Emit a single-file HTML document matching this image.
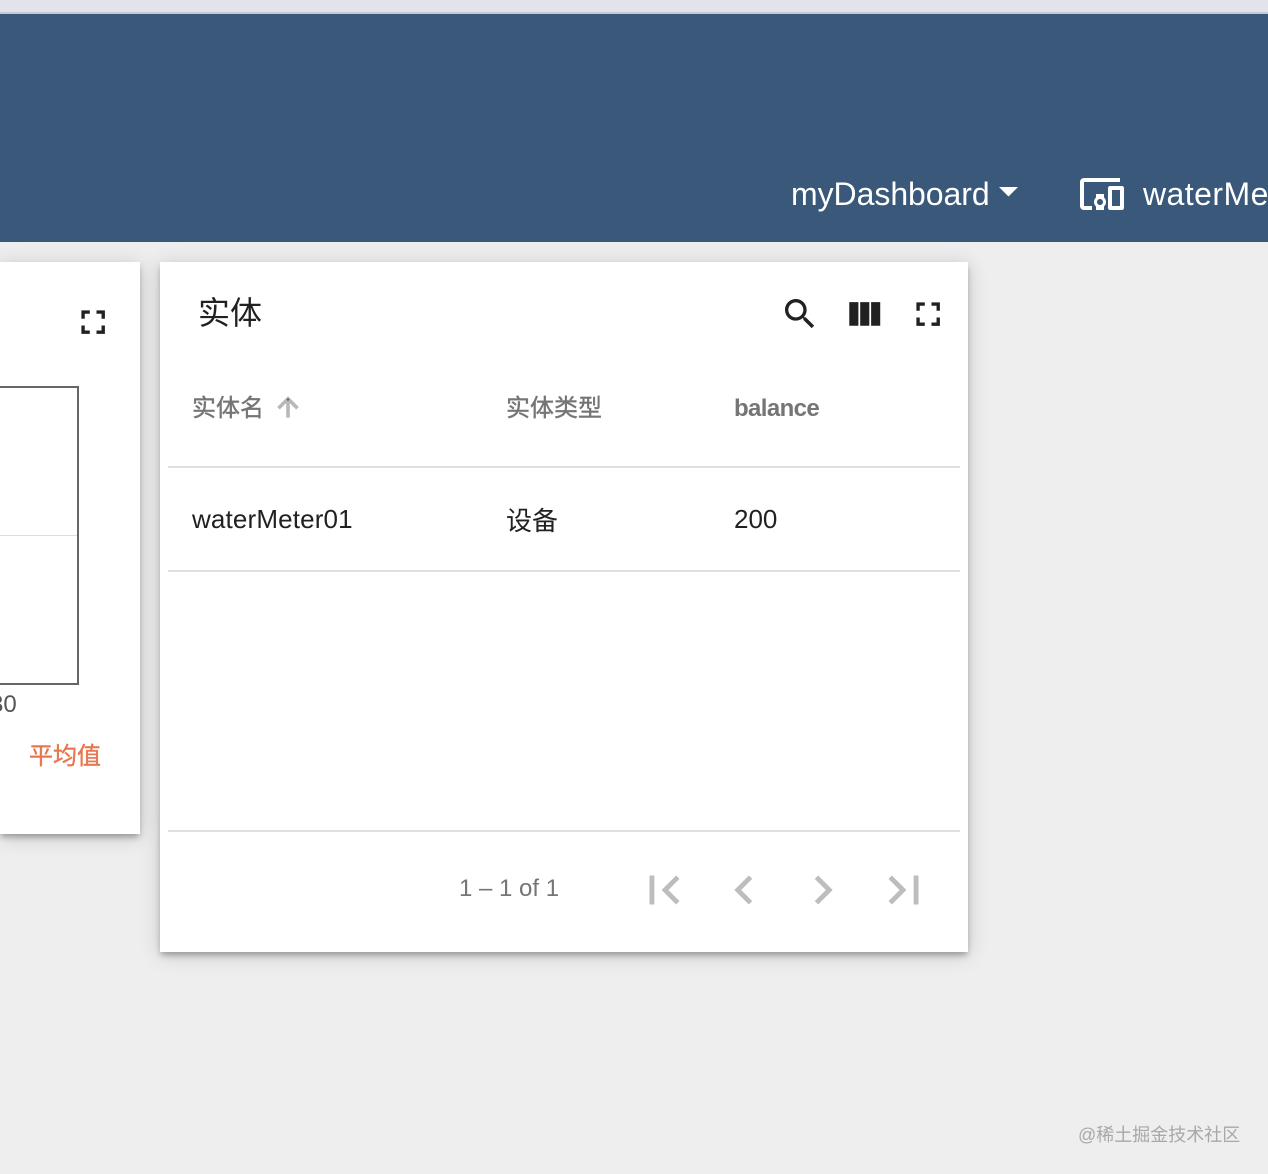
<!DOCTYPE html>
<html lang="zh">
<head>
<meta charset="utf-8">
<title>Dashboard</title>
<style>
html,body{margin:0;padding:0;width:1268px;height:1174px;overflow:hidden;background:#eeeeef;}
body{position:relative;font-family:"Liberation Sans","Noto Sans CJK SC",sans-serif;}
.a{position:absolute;white-space:nowrap;line-height:1;}
.clip{position:absolute;overflow:hidden;}
svg{position:absolute;display:block;}
.strip{position:absolute;left:0;top:0;width:1268px;height:12px;background:#e3e3ec;border-bottom:2px solid #c9c9d3;}
.head{position:absolute;left:0;top:14px;width:1268px;height:228px;background:#3a5879;}
.card{position:absolute;background:#fff;top:262px;box-shadow:0 4px 6px -1px rgba(0,0,0,.3),0 3px 20px 0 rgba(0,0,0,.16);}
.line{position:absolute;left:168px;width:792px;height:2px;background:#e0e0e0;}
.th{color:#757575;font-size:24px;}
.cjk{-webkit-text-stroke:.4px currentColor;}
.td{color:#212121;font-size:26px;}
</style>
</head>
<body>
<div class="strip"></div>
<div class="head"></div>

<div class="a" style="left:791px;top:178px;font-size:32px;color:#fff;letter-spacing:-.05px;">myDashboard</div>
<svg style="left:996px;top:184px" width="24" height="16" viewBox="0 0 24 16"><path d="M3 3h19l-9.500 9.500z" fill="#fff"/></svg>
<svg style="left:1078px;top:170px" width="48" height="48" viewBox="0 0 24 24"><path fill="#fff" d="M3 6h18V4H3c-1.100 0-2 .9-2 2v12c0 1.100.9 2 2 2h4v-2H3V6zm10 6H9v1.780c-.61.55-1 1.330-1 2.220s.39 1.670 1 2.220V20h4v-1.780c.61-.55 1-1.340 1-2.220s-.39-1.670-1-2.220V12zm-2 5.500c-.83 0-1.500-.67-1.500-1.500s.67-1.500 1.500-1.500 1.500.67 1.500 1.500-.67 1.500-1.500 1.500zM22 8h-6c-.5 0-1 .5-1 1v10c0 .5.5 1 1 1h6c.5 0 1-.5 1-1V9c0-.5-.5-1-1-1zm-1 10h-4v-8h4v8z"/></svg>
<div class="clip" style="left:1143px;top:170px;width:125px;height:50px;">
  <div class="a" style="left:0;top:8px;font-size:32px;color:#fff;letter-spacing:.45px;">waterMe</div>
</div>

<!-- left card -->
<div class="card" style="left:0;width:140px;height:572px;"></div>
<svg style="left:72.600px;top:301.900px" width="40.300" height="40.300" viewBox="0 0 24 24"><path fill="#212121" d="M7 14H5v5h5v-2H7v-3zm-2-4h2V7h3V5H5v5zm12 7h-3v2h5v-5h-2v3zM14 5v2h3v3h2V5h-5z"/></svg>
<div style="position:absolute;left:0;top:386px;width:77px;height:295px;border:2px solid #666;border-left:0;"></div>
<div style="position:absolute;left:0;top:535px;width:77px;height:1px;background:#ddd;"></div>
<div class="clip" style="left:0;top:690px;width:30px;height:30px;">
  <div class="a" style="left:-10px;top:3px;font-size:24px;color:#555;">30</div>
</div>
<div class="a cjk" style="left:29px;top:745px;font-size:24px;color:#e8764f;">平均值</div>

<!-- right card -->
<div class="card" style="left:160px;width:808px;height:690px;"></div>
<div class="a" style="left:198px;top:297px;font-size:32px;color:#212121;">实体</div>
<svg style="left:780px;top:294px" width="40" height="40" viewBox="0 0 24 24"><path fill="#212121" d="M15.500 14h-.79l-.28-.27C15.410 12.590 16 11.110 16 9.500 16 5.910 13.090 3 9.500 3S3 5.910 3 9.500 5.910 16 9.500 16c1.610 0 3.090-.59 4.230-1.570l.27.28v.79l5 4.990L20.490 19l-4.990-5zm-6 0C7.010 14 5 11.990 5 9.500S7.010 5 9.500 5 14 7.010 14 9.500 11.990 14 9.500 14z"/></svg>
<svg style="left:841.700px;top:293.200px" width="43.700" height="43.700" viewBox="0 0 24 24"><path fill="#212121" d="M10 18h5V5h-5v13zm-6 0h5V5H4v13zM16 5v13h5V5h-5z"/></svg>
<svg style="left:908.300px;top:293.900px" width="40.300" height="40.300" viewBox="0 0 24 24"><path fill="#212121" d="M7 14H5v5h5v-2H7v-3zm-2-4h2V7h3V5H5v5zm12 7h-3v2h5v-5h-2v3zM14 5v2h3v3h2V5h-5z"/></svg>

<div class="a th cjk" style="left:192px;top:397px;">实体名</div>
<svg style="left:273px;top:392px" width="30" height="30" viewBox="0 0 24 24"><path fill="#b8b8b8" stroke="#b8b8b8" stroke-width=".9" d="M4 12l1.410 1.410L11 7.830V20h2V7.830l5.580 5.590L20 12l-8-8-8 8z"/><circle cx="12" cy="6" r="1" fill="#666"/></svg>
<div class="a th cjk" style="left:506px;top:397px;">实体类型</div>
<div class="a th" style="left:734px;top:397px;font-weight:700;letter-spacing:-.6px;">balance</div>
<div class="line" style="top:466px;"></div>
<div class="a td" style="left:192px;top:506px;letter-spacing:.15px;">waterMeter01</div>
<div class="a td" style="left:506px;top:508px;">设备</div>
<div class="a td" style="left:734px;top:506px;">200</div>
<div class="line" style="top:570px;"></div>
<div class="line" style="top:830px;"></div>

<div class="a" style="left:459px;top:877px;font-size:24px;color:#757575;">1 – 1 of 1</div>
<svg style="left:634.600px;top:860.600px" width="58" height="58" viewBox="0 0 24 24"><path fill="#bdbdbd" d="M18.410 16.590L13.820 12l4.590-4.590L17 6l-6 6 6 6zM6 6h2v12H6z"/></svg>
<svg style="left:714.800px;top:860.600px" width="58" height="58" viewBox="0 0 24 24"><path fill="#bdbdbd" d="M15.410 7.410L14 6l-6 6 6 6 1.410-1.410L10.830 12z"/></svg>
<svg style="left:794.400px;top:860.600px" width="58" height="58" viewBox="0 0 24 24"><path fill="#bdbdbd" d="M10 6L8.590 7.410 13.170 12l-4.580 4.590L10 18l6-6z"/></svg>
<svg style="left:874.600px;top:860.600px" width="58" height="58" viewBox="0 0 24 24"><path fill="#bdbdbd" d="M5.590 7.410L10.180 12l-4.590 4.590L7 18l6-6-6-6zM16 6h2v12h-2z"/></svg>

<div class="a" style="left:1078px;top:1126px;font-size:18px;color:#a8a8a8;">@稀土掘金技术社区</div>
</body>
</html>
